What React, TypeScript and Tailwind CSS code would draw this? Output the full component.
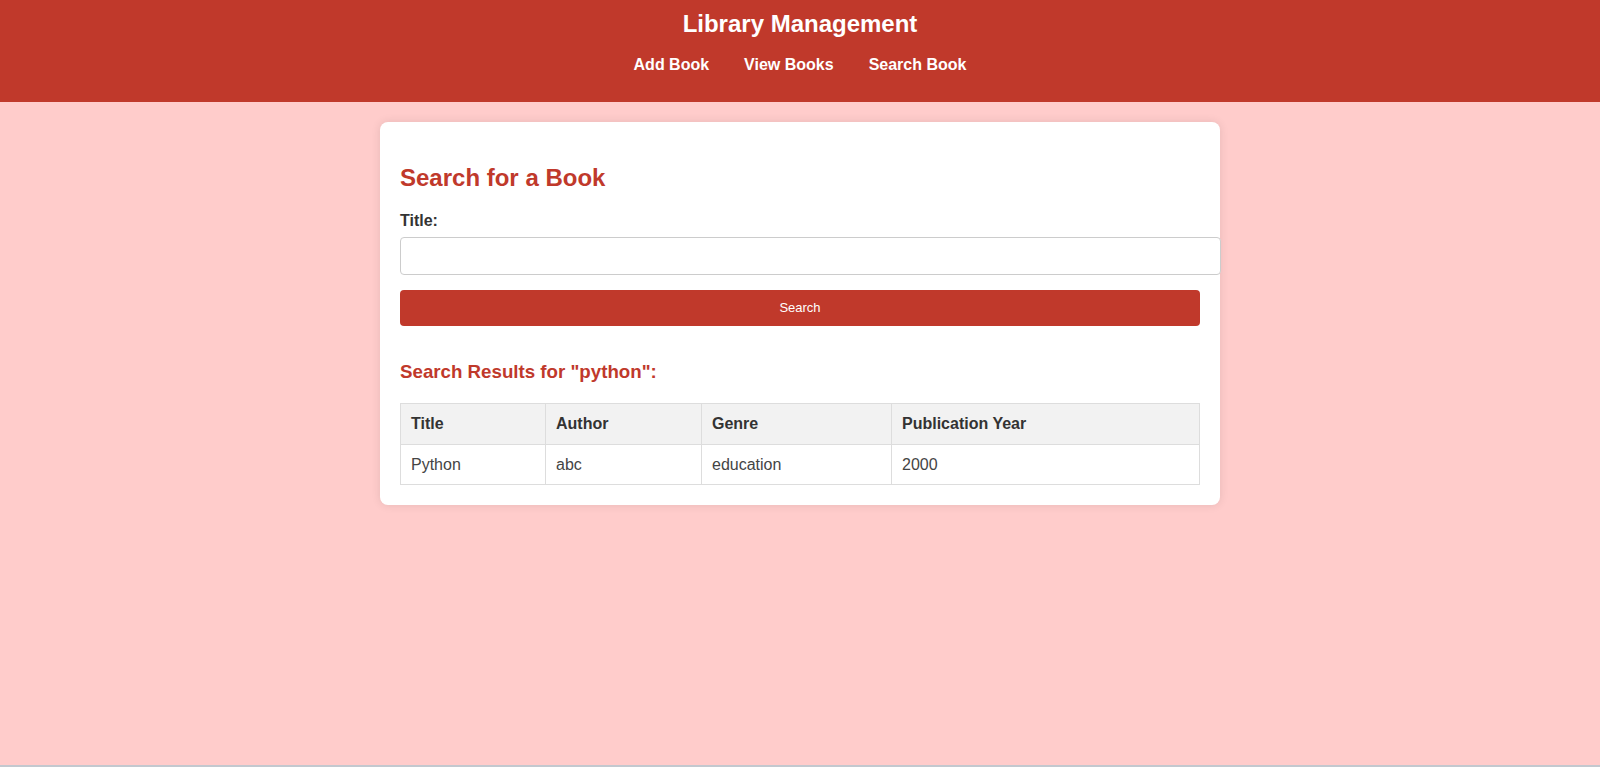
import React from "react";

export default function App() {
  const font = { fontFamily: '"Liberation Sans", Arial, sans-serif' };
  return (
    <div className="h-screen flex flex-col bg-[#ffcccb] text-[#333]" style={font}>
      <header className="h-[102px] shrink-0 bg-[#c0392b] text-white flex flex-col items-center">
        <h1 className="pt-[10px] text-[24px] leading-[28px] font-bold">Library Management</h1>
        <nav className="mt-[18px] flex gap-[35px] text-[16px] leading-[18px] font-bold">
          <a href="#">Add Book</a>
          <a href="#">View Books</a>
          <a href="#">Search Book</a>
        </nav>
      </header>
      <main className="flex-1">
        <div className="mx-auto mt-[20px] w-[840px] rounded-lg bg-white p-[20px] shadow-[0_0_10px_rgba(0,0,0,0.1)]">
          <h2 className="mt-[22px] text-[24px] leading-[28px] font-bold text-[#c0392b]">Search for a Book</h2>
          <label className="mt-[20px] block text-[16px] leading-[18px] font-bold">Title:</label>
          <input
            type="text"
            className="mt-[7px] block h-[38px] w-[821px] rounded-[4px] border border-[#ccc] bg-white px-[10px] outline-none"
          />
          <button className="mt-[15px] block h-[36px] w-[800px] rounded-[4px] bg-[#c0392b] text-[13px] text-white">
            Search
          </button>
          <h3 className="mt-[35px] text-[18.72px] leading-[22px] font-bold text-[#c0392b]">
            Search Results for "python":
          </h3>
          <table className="mt-[20px] w-[800px] table-fixed border-collapse text-[16px] leading-[18px]">
            <thead>
              <tr className="h-[41px] bg-[#f2f2f2]">
                <th className="w-[145px] border border-[#ddd] px-[10px] text-left font-bold">Title</th>
                <th className="w-[156px] border border-[#ddd] px-[10px] text-left font-bold">Author</th>
                <th className="w-[190px] border border-[#ddd] px-[10px] text-left font-bold">Genre</th>
                <th className="border border-[#ddd] px-[10px] text-left font-bold">Publication Year</th>
              </tr>
            </thead>
            <tbody className="text-[#444]">
              <tr className="h-[40px]">
                <td className="border border-[#ddd] px-[10px]">Python</td>
                <td className="border border-[#ddd] px-[10px]">abc</td>
                <td className="border border-[#ddd] px-[10px]">education</td>
                <td className="border border-[#ddd] px-[10px]">2000</td>
              </tr>
            </tbody>
          </table>
        </div>
      </main>
      <div className="h-[2px] shrink-0 bg-[#c3c8cf]" />
    </div>
  );
}
